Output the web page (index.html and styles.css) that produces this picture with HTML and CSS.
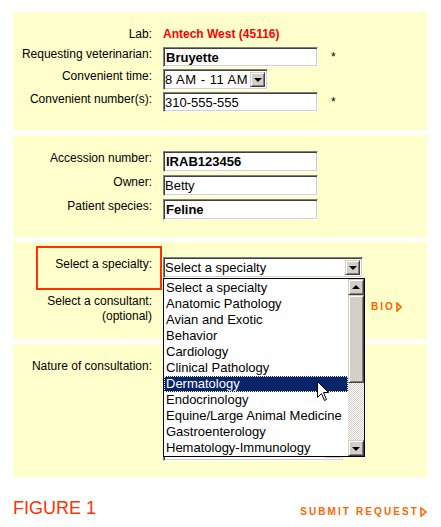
FILE: index.html
```html
<!DOCTYPE html>
<html lang="en">
<head>
    <meta charset="UTF-8">
    <title>Request a consultation</title>
    <link rel="stylesheet" href="styles.css">
</head>
<body>
<div class="page">
    <div class="panel panel-lab">
        <span class="label">Lab:</span>
        <span class="lab-name">Antech West (45116)</span>

        <span class="label">Requesting veterinarian:</span>
        <div class="field-line"><input class="field strong" value="Bruyette" readonly><span class="req">*</span></div>

        <span class="label">Convenient time:</span>
        <div class="select time-select">
            <span class="select-text">8 AM - 11 AM</span>
            <span class="btn arrow-btn"><i class="tri-down"></i></span>
        </div>

        <span class="label">Convenient number(s):</span>
        <div class="field-line"><input class="field" value="310-555-555" readonly><span class="req">*</span></div>
    </div>

    <div class="panel panel-case">
        <span class="label">Accession number:</span>
        <input class="field strong" value="IRAB123456" readonly>
        <span class="label">Owner:</span>
        <input class="field" value="Betty" readonly>
        <span class="label">Patient species:</span>
        <input class="field strong" value="Feline" readonly>
    </div>

    <div class="panel panel-specialty">
        <span class="label marked">Select a specialty:</span>
        <div class="select specialty-select">
            <span class="select-text">Select a specialty</span>
            <span class="btn arrow-btn"><i class="tri-down"></i></span>

            <div class="dropdown">
                <ul class="options">
                    <li>Select a specialty</li>
                    <li>Anatomic Pathology</li>
                    <li>Avian and Exotic</li>
                    <li>Behavior</li>
                    <li>Cardiology</li>
                    <li>Clinical Pathology</li>
                    <li class="active">Dermatology</li>
                    <li>Endocrinology</li>
                    <li>Equine/Large Animal Medicine</li>
                    <li>Gastroenterology</li>
                    <li>Hematology-Immunology</li>
                </ul>
                <div class="scrollbar">
                    <span class="btn scroll-btn"><i class="tri-up"></i></span>
                    <span class="btn thumb"></span>
                    <span class="track"></span>
                    <span class="btn scroll-btn"><i class="tri-down"></i></span>
                </div>
                <svg class="cursor" width="12" height="20" viewBox="0 0 12 20">
                    <path d="M0.5 0.5 L0.5 16.5 L4.5 12.5 L7.5 19.5 L9.5 18.5 L6.5 11.5 L11.5 11.5 Z" fill="#fff" stroke="#000" stroke-width="1"/>
                </svg>
            </div>
        </div>

        <span class="label two-line">Select a consultant:<br>(optional)</span>
        <div class="consultant-line">
            <div class="select consultant-select">
                <span class="btn arrow-btn"><i class="tri-down"></i></span>
            </div>
            <a class="orange-link bio" href="#">BIO<svg width="6" height="10" viewBox="0 0 6 10"><path d="M1 1 L5 5 L1 9 Z" fill="none" stroke="#ff6600" stroke-width="1.6"/></svg></a>
        </div>
    </div>

    <div class="panel panel-nature">
        <span class="label">Nature of consultation:</span>
        <div class="textarea"><span class="textarea-bar"></span></div>
    </div>

    <div class="footer">
        <span class="figure">FIGURE 1</span>
        <a class="orange-link submit" href="#">SUBMIT REQUEST<svg width="7" height="10" viewBox="0 0 7 10"><path d="M1 1 L6 5 L1 9 Z" fill="none" stroke="#ff6600" stroke-width="1.6"/></svg></a>
    </div>
</div>
</body>
</html>
```

FILE: styles.css
```css
* {
    box-sizing: border-box;
}
body {
    margin: 0;
    background: #fff;
    font-family: "Liberation Sans", Arial, sans-serif;
    font-size: 12px;
    color: #000;
}
.page {
    width: 441px;
    padding: 12px 14px 0 13px;
}

/* yellow form panels */
.panel {
    display: grid;
    grid-template-columns: 139px 1fr;
    column-gap: 11px;
    row-gap: 2px;
    align-items: start;
    padding: 15px 0 18px;
    margin-bottom: 5px;
    background: #ffffcc;
}
.panel-case {
    row-gap: 3px;
    padding: 16px 0 17px;
}
.panel-case .field {
    height: 21px;
}
.panel-specialty {
    row-gap: 16px;
    padding: 15px 0;
}
.panel-nature {
    padding: 15px 0 16px;
    margin-bottom: 0;
}
.label {
    text-align: right;
    line-height: 14px;
}
.two-line {
    line-height: 15px;
}
.lab-name {
    line-height: 14px;
    margin-bottom: 4px;
    color: #ff0000;
    font-weight: bold;
}
.marked {
    position: relative;
}
.marked:before {
    content: "";
    position: absolute;
    top: -11px;
    right: -10px;
    width: 122px;
    height: 40px;
    border: 2px solid #ff3300;
}

/* fields */
.field-line {
    display: flex;
    align-items: center;
    line-height: 14px;
}
.req {
    margin-left: 13px;
}
.field {
    width: 155px;
    height: 20px;
    margin: 0;
    padding: 0 1px;
    border: 1px solid;
    border-color: #808080 #fff #fff #808080;
    box-shadow: inset 1px 1px #404040, inset -1px -1px #d4d0c8;
    background: #fff;
    font: 13px "Liberation Sans", Arial, sans-serif;
    color: #000;
    outline: none;
}
.field.strong {
    font-weight: bold;
    padding-left: 2px;
}
.select {
    position: relative;
    display: flex;
    align-items: center;
    justify-content: space-between;
    height: 21px;
    padding: 2px;
    border: 1px solid;
    border-color: #808080 #fff #fff #808080;
    box-shadow: inset 1px 1px #404040, inset -1px -1px #d4d0c8;
    background: #fff;
    font-size: 13px;
}
.select-text {
    margin-left: -1px;
    line-height: 15px;
    white-space: nowrap;
}
.time-select {
    width: 105px;
}
.time-select .select-text {
    letter-spacing: 0.5px;
}
.specialty-select,
.consultant-select {
    width: 200px;
}
.consultant-select {
    justify-content: flex-end;
}
.textarea {
    display: flex;
    justify-content: flex-end;
    width: 181px;
    height: 102px;
    padding: 2px;
    border: 1px solid;
    border-color: #808080 #fff #fff #808080;
    box-shadow: inset 1px 1px #404040, inset -1px -1px #d4d0c8;
    background: #fff;
}
.textarea-bar {
    width: 16px;
    background: #d4d0c8;
}

/* raised windows buttons */
.btn {
    display: flex;
    align-items: center;
    justify-content: center;
    background: #d4d0c8;
    border: 1px solid;
    border-color: #d4d0c8 #404040 #404040 #d4d0c8;
    box-shadow: inset 1px 1px #fff, inset -1px -1px #808080;
}
.arrow-btn {
    width: 15px;
    height: 15px;
    flex: none;
}
.tri-down,
.tri-up {
    width: 0;
    height: 0;
    border-left: 4px solid transparent;
    border-right: 4px solid transparent;
}
.tri-down {
    border-top: 4px solid #000;
    margin-top: 1px;
}
.tri-up {
    border-bottom: 4px solid #000;
}

/* open list of the specialty select */
.dropdown {
    position: absolute;
    top: 20px;
    left: -1px;
    width: 202px;
    height: 179px;
    padding-top: 1px;
    border: 1px solid #000;
    background: #fff;
    z-index: 5;
}
.options {
    width: 184px;
    margin: 0;
    padding: 0;
    list-style: none;
}
.options li {
    height: 16px;
    padding-left: 2px;
    line-height: 16px;
    font-size: 13px;
    white-space: nowrap;
}
.options li.active {
    background: #0a246a;
    color: #fff;
    outline: 1px dotted #ffffcc;
    outline-offset: -1px;
}
.scrollbar {
    position: absolute;
    top: 0;
    right: 0;
    bottom: 0;
    display: flex;
    flex-direction: column;
    width: 16px;
}
.scroll-btn {
    height: 16px;
    flex: none;
}
.thumb {
    height: 88px;
    flex: none;
}
.track {
    flex: 1;
    background: repeating-conic-gradient(#d4d0c8 0 25%, #fff 0 50%) 0 0 / 2px 2px;
}
.cursor {
    position: absolute;
    left: 153px;
    top: 102px;
}

/* consultant row */
.consultant-line {
    display: flex;
    align-items: flex-start;
}
.orange-link {
    display: flex;
    align-items: center;
    color: #ff6600;
    font-size: 10px;
    font-weight: bold;
    letter-spacing: 2px;
    line-height: 12px;
    text-decoration: none;
}
.orange-link svg {
    margin-left: 1px;
}
.bio {
    margin: 7px 0 0 8px;
}

/* footer */
.footer {
    display: flex;
    justify-content: space-between;
    align-items: baseline;
    padding-top: 21px;
}
.figure {
    color: #ff3300;
    font-size: 18px;
    line-height: 21px;
}
.submit {
    position: relative;
    top: 1px;
    letter-spacing: 2.1px;
}
```
